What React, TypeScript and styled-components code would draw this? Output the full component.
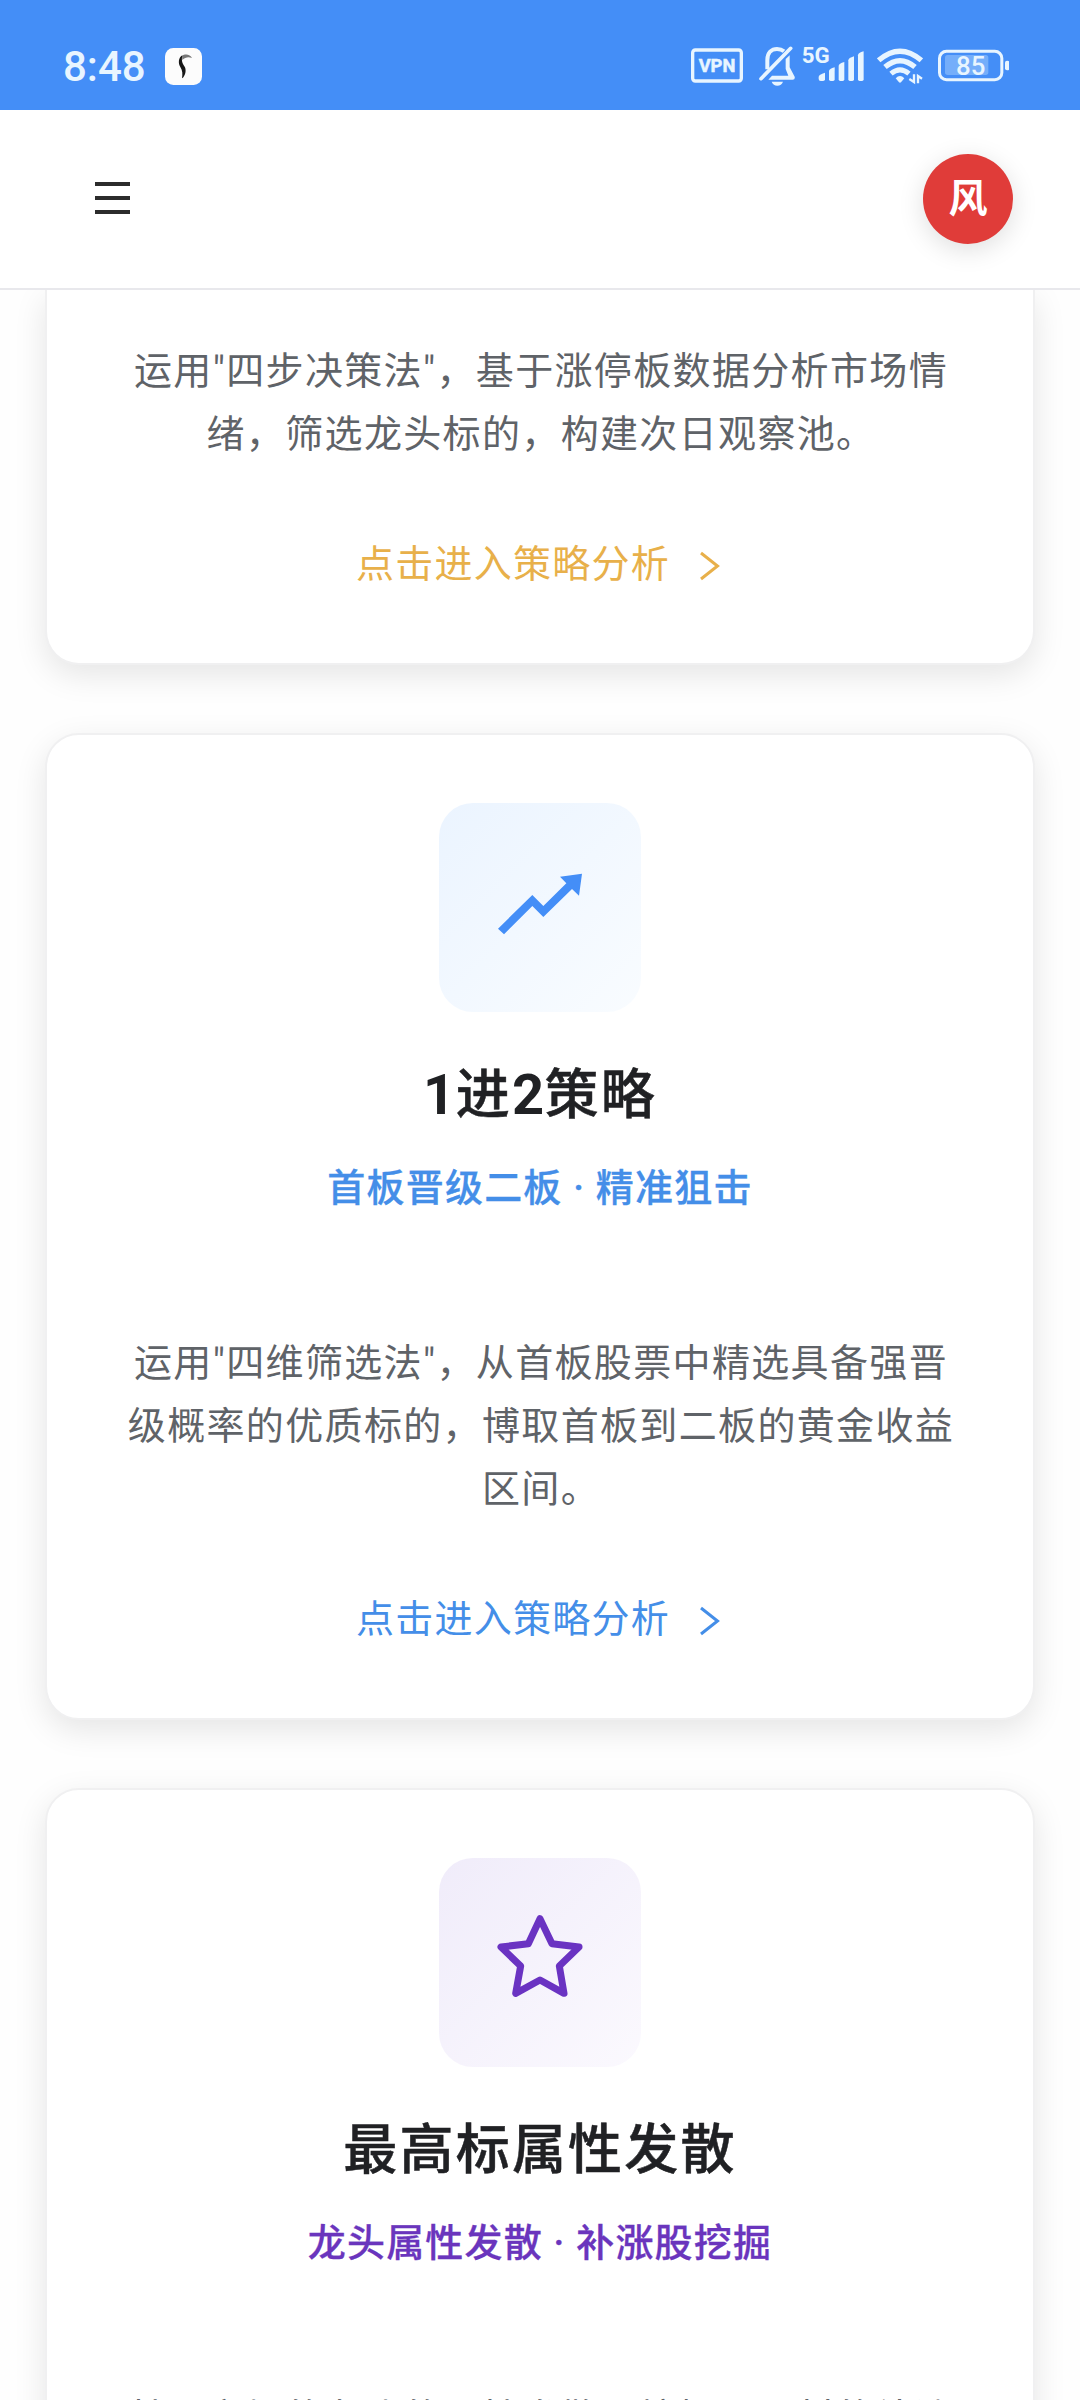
import React from "react";
import styled, { createGlobalStyle } from "styled-components";

const sans = `Roboto, "Noto Sans CJK SC", sans-serif`;

const GlobalStyle = createGlobalStyle`
  * { box-sizing: border-box; }
  body { margin: 0; background: #fff; font-family: ${sans}; }
`;

const Screen = styled.div`
  width: 1080px;
  height: 2400px;
  overflow: hidden;
  display: flex;
  flex-direction: column;
  background: #fefefe;
`;

const StatusBar = styled.div`
  height: 110px;
  flex: none;
  padding: 20px 71px 0 63px;
  display: flex;
  justify-content: space-between;
  background: #448ef7;
  color: #e8f5ff;
`;

const StatusGroup = styled.div`
  height: 90px;
  display: flex;
  align-items: center;
`;

const Clock = styled.span`
  font-size: 42px;
  font-weight: 500;
  line-height: 48px;
  padding-top: 3px;
  width: 102px;
  white-space: nowrap;
`;

const AppBadge = styled.svg`
  width: 37px;
  height: 37px;
  margin-top: 3px;
`;

const StatusIcon = styled.svg<{ $w: number; $gap?: number }>`
  width: ${(p) => p.$w}px;
  height: 90px;
  flex: none;
  margin-left: ${(p) => p.$gap ?? 0}px;
  font-family: Roboto, sans-serif;
`;

const Header = styled.header`
  height: 180px;
  flex: none;
  display: flex;
  align-items: center;
  justify-content: space-between;
  padding: 0 67px 0 95px;
  background: #fff;
  border-bottom: 2px solid #e8e8ec;
`;

const MenuButton = styled.button`
  width: 35px;
  height: 32px;
  padding: 0;
  border: 0;
  background: none;
  display: flex;
  flex-direction: column;
  justify-content: space-between;
  margin-bottom: 2px;
`;

const MenuLine = styled.span`
  display: block;
  height: 4px;
  background: #2c2c2c;
`;

const Avatar = styled.div`
  width: 90px;
  height: 90px;
  border-radius: 50%;
  background: #e03c39;
  color: #fff;
  font-size: 39px;
  font-weight: 700;
  line-height: 91px;
  text-align: center;
  box-shadow: 0 6px 26px rgba(0, 0, 0, 0.13);
`;

const Feed = styled.main`
  flex: 1;
  min-height: 0;
  overflow: hidden;
  display: flex;
  flex-direction: column;
  gap: 68px;
  padding: 0 45px;
`;

const Card = styled.section<{ $scrolled?: boolean }>`
  flex: none;
  display: flex;
  flex-direction: column;
  align-items: center;
  padding: ${(p) => (p.$scrolled ? "50px" : "68px")} 72px 69px;
  background: #fff;
  border: 2px solid #f0f0f1;
  border-top-width: ${(p) => (p.$scrolled ? 0 : 2)}px;
  border-radius: ${(p) => (p.$scrolled ? "0 0 34px 34px" : "34px")};
  box-shadow: 0 10px 32px rgba(0, 0, 0, 0.1);
`;

const IconTile = styled.div<{ $from: string; $to: string }>`
  width: 202px;
  height: 209px;
  border-radius: 34px;
  background: linear-gradient(135deg, ${(p) => p.$from}, ${(p) => p.$to});
`;

const TileArt = styled.svg`
  display: block;
  width: 202px;
  height: 209px;
`;

const Title = styled.h2`
  margin: 50px 0 0;
  font-size: 54px;
  font-weight: 500;
  line-height: 68px;
  letter-spacing: 2.2px;
  color: #202124;
  -webkit-text-stroke: 0.5px #202124;
  white-space: nowrap;
`;

const Digit = styled.span`
  font-size: 56px;
  font-weight: 700;
  line-height: 1;
  letter-spacing: 0.5px;
  -webkit-text-stroke: 0;
`;

const Subtitle = styled.p<{ $color: string }>`
  margin: 33px 0 0;
  font-size: 38px;
  font-weight: 500;
  line-height: 50px;
  letter-spacing: 1.2px;
  color: ${(p) => p.$color};
  -webkit-text-stroke: 0.3px ${(p) => p.$color};
  white-space: nowrap;
`;

const Description = styled.p<{ $lead?: boolean }>`
  margin: ${(p) => (p.$lead ? 0 : 119)}px 0 0;
  width: 838px;
  padding-left: 2px;
  font-size: 38px;
  line-height: 63px;
  letter-spacing: 1.35px;
  color: #5f6368;
  text-align: center;
`;

const EnterLink = styled.a<{ $color: string }>`
  margin-top: 68px;
  margin-right: 3px;
  height: 60px;
  display: flex;
  align-items: center;
  gap: 29px;
  font-size: 38px;
  letter-spacing: 1.25px;
  line-height: 60px;
  color: ${(p) => p.$color};
  white-space: nowrap;
`;

const Chevron = styled.svg`
  width: 22px;
  height: 32px;
  margin-top: 3px;
`;

function Enter({ color }: { color: string }) {
  return (
    <EnterLink $color={color}>
      点击进入策略分析
      <Chevron viewBox="0 0 22 32" fill="none" stroke={color} strokeWidth="3">
        <path d="M2 3 18.5 16 2 29" />
      </Chevron>
    </EnterLink>
  );
}

function StatusIcons() {
  const c = "#e8f5ff";
  return (
    <StatusGroup>
      <StatusIcon $w={52} viewBox="93 0 156 270">
        <rect x="98" y="90" width="146" height="93" rx="8" fill="none" stroke={c} strokeWidth="10" />
        <text x="116" y="156" fill={c} stroke={c} strokeWidth="1.5" fontSize="56" fontWeight="700" textLength="110" lengthAdjust="spacingAndGlyphs">VPN</text>
      </StatusIcon>
      <StatusIcon $w={36} $gap={15.67} viewBox="296 0 108 270" fill="none" stroke={c}>
        <path d="M302 176 391 85" strokeWidth="11" strokeLinecap="round" />
        <path d="M321 148V120C321 98 334 87 350 87C358 87 365 89 371 94" strokeWidth="12" />
        <path d="M376 117 388 106V142L403 170Q405 179 397 179H324L335 167H384L376 147Z" fill={c} stroke="none" />
        <path d="M334 185H368C365 193 359 197 351 197C343 197 337 193 334 185Z" fill={c} stroke="none" />
      </StatusIcon>
      <StatusIcon $w={61.67} $gap={7.67} viewBox="427 0 185 270" fill={c}>
        <text x="426" y="129" fontSize="64" fontWeight="700" textLength="84" lengthAdjust="spacingAndGlyphs">5G</text>
        <path d="M477 171Q477 163 496 158V178Q496 183 490 183H483Q477 183 477 177Z" />
        <path d="M508 153Q508 147 525 142V178Q525 183 520 183H513Q508 183 508 178Z" />
        <path d="M537 138Q537 131 554 126V178Q554 183 549 183H542Q537 183 537 178Z" />
        <path d="M566 121Q566 114 583 109V178Q583 183 578 183H571Q566 183 566 178Z" />
        <path d="M595 106Q595 98 612 94V178Q612 183 607 183H600Q595 183 595 178Z" />
      </StatusIcon>
      <StatusIcon $w={46} $gap={12.67} viewBox="650 0 138 270" fill="none" stroke={c}>
        <path d="M655 121Q719 66 783 121" strokeWidth="16" />
        <path d="M674 141Q719 103 764 141" strokeWidth="16" />
        <path d="M692 161Q719 138 746 161" strokeWidth="15" />
        <path d="M706 175Q719 161 732 175L722 187Q719 189 716 187Z" fill={c} stroke="none" />
        <path d="M761 163V186L747 177M773 190V168L785 176" strokeWidth="7" />
      </StatusIcon>
      <StatusIcon $w={71.33} $gap={15} viewBox="833 0 214 270">
        <rect x="837.5" y="94" width="187" height="85" rx="21" fill="none" stroke={c} strokeWidth="9" />
        <rect x="854" y="105" width="130" height="60" rx="8" fill="#74aefa" />
        <rect x="1034" y="122" width="13" height="29" rx="6" fill={c} />
        <text x="887" y="165" fill={c} fontSize="75" fontWeight="500" textLength="88" lengthAdjust="spacingAndGlyphs">85</text>
      </StatusIcon>
    </StatusGroup>
  );
}

export default function App() {
  return (
    <Screen lang="zh-CN">
      <GlobalStyle />
      <StatusBar>
        <StatusGroup>
          <Clock>8:48</Clock>
          <AppBadge viewBox="0 0 111 111">
            <rect width="111" height="111" rx="25" fill="#fcfcfc" />
            <path d="M51 24C60 16 76 19 81 30C71 26 61 27 52 36Z" fill="#777" />
            <path d="M52 22C40 29 39 46 46 57C53 68 53 78 51 91C61 84 65 66 59 56C51 45 49 37 52 22Z" fill="#161616" />
          </AppBadge>
        </StatusGroup>
        <StatusIcons />
      </StatusBar>

      <Header>
        <MenuButton aria-label="菜单">
          <MenuLine />
          <MenuLine />
          <MenuLine />
        </MenuButton>
        <Avatar>风</Avatar>
      </Header>

      <Feed>
        <Card $scrolled>
          <Description $lead>
            运用"四步决策法"，基于涨停板数据分析市场情绪，筛选龙头标的，构建次日观察池。
          </Description>
          <Enter color="#e8b04a" />
        </Card>

        <Card>
          <IconTile $from="#ebf4ff" $to="#f9fcff">
            <TileArt viewBox="117 99 606 627">
              <path
                d="M294 476 397 375 430 408 499 340 480 320 546 311 537 377 516 357 430 441 397 408 312 493Z"
                fill="#448ef7"
              />
            </TileArt>
          </IconTile>
          <Title>
            <Digit>1</Digit>进<Digit>2</Digit>策略
          </Title>
          <Subtitle $color="#448ee8">首板晋级二板 · 精准狙击</Subtitle>
          <Description>
            运用"四维筛选法"，从首板股票中精选具备强晋级概率的优质标的，博取首板到二板的黄金收益区间。
          </Description>
          <Enter color="#448ee8" />
        </Card>

        <Card>
          <IconTile $from="#f0ecfa" $to="#fbf9fe">
            <TileArt viewBox="117 81 606 627">
              <path
                d="M420 263 456 338 537 348 478 405 492 487 420 447 347 487 362 405 303 348 385 338Z"
                fill="none"
                stroke="#6a33c2"
                strokeWidth="21"
                strokeLinejoin="round"
              />
            </TileArt>
          </IconTile>
          <Title>最高标属性发散</Title>
          <Subtitle $color="#6a35bd">龙头属性发散 · 补涨股挖掘</Subtitle>
          <Description>基于市场的龙头的属性发散，挖掘同题材的补涨标的</Description>
        </Card>
      </Feed>
    </Screen>
  );
}
